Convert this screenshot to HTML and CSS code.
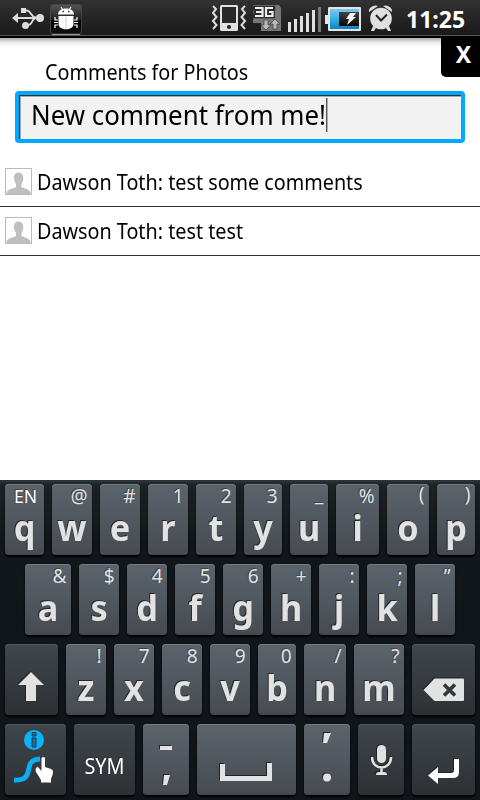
FILE: index.html
```html
<!DOCTYPE html>
<html lang="en">
<head>
<meta charset="utf-8">
<title>Comments for Photos</title>
<link rel="stylesheet" href="styles.css">
</head>
<body>
<header class="status">
  <svg class="status-icons" width="400" height="38" viewBox="0 0 400 38">
    <defs>
      <linearGradient id="bug" x2="0" y2="1"><stop offset="0" stop-color="#555"/><stop offset=".5" stop-color="#222"/><stop offset=".55" stop-color="#000"/><stop offset="1" stop-color="#111"/></linearGradient>
      <linearGradient id="cell" x2="0" y2="1"><stop offset="0" stop-color="#7cc8ec"/><stop offset=".5" stop-color="#35b0e5"/><stop offset="1" stop-color="#0785bd"/></linearGradient>
      <linearGradient id="dark" x2="0" y2="1"><stop offset="0" stop-color="#444"/><stop offset="1" stop-color="#050505"/></linearGradient>
    </defs>
    <g fill="#ddd" stroke="none">
      <path d="M12 18l6-5v10z"/><circle cx="40" cy="18" r="4"/><rect x="21" y="8" width="5" height="5"/><circle cx="25.500" cy="25.500" r="3.500"/>
      <path d="M16 18H40M24 10.500H27C31 10.500 31 17.500 36 17.500M26 25.500C34 25.500 31 18 36 18" fill="none" stroke="#ddd" stroke-width="1.800"/>
    </g>
    <rect x="50.500" y="4.500" width="31" height="29.500" rx="2" fill="url(#bug)" stroke="#444"/>
    <path d="M52 34.500H80" stroke="#999"/>
    <g fill="#fff"><path d="M58 14.500C58 6.500 74 6.500 74 14.500z"/><path d="M58.500 16H73.500V24C73.500 31 58.500 31 58.500 24z"/>
      <path d="M61 7l2 3M71 7l-2 3M58 20h-3v-3M58 22.500h-4M58 25h-3v3M74 20h3v-3M74 22.500h4M74 25h3v3" fill="none" stroke="#fff" stroke-width="1.200"/></g>
    <path d="M66 17V29" stroke="#ccc"/><path d="M62.500 11.500h1.500M68 11.500h1.500" stroke="#333" stroke-width="1.500"/>
    <path d="M213 6l3 3-3 4 3.500 4-3.500 4 3.500 4-3.500 4M245 6l-3 3 3 4-3.500 4 3.500 4-3.500 4 3.500 4" fill="none" stroke="#ddd" stroke-width="2"/>
    <rect x="220" y="5" width="18" height="26" rx="1.500" fill="#e0e0e0"/><rect x="222" y="7" width="14" height="16" fill="#292929"/><circle cx="229" cy="27" r="2" fill="#222"/>
    <path d="M253 5H279L281 8V31H261V23H253z" fill="#777"/>
    <path d="M255 8H262.500V16H255M256 12H262M273 8H266V16H272.500V12H269" fill="none" stroke="#2a2a2a" stroke-width="4.500" stroke-linecap="square"/>
    <path d="M255 8H262.500V16H255M256 12H262M273 8H266V16H272.500V12H269" fill="none" stroke="#eee" stroke-width="2.200"/>
    <path d="M264 20h4v5h3l-5 5-5-5h3zM273 29h4v-5h3l-5-5-5 5h3z" fill="#bbb" stroke="#444" stroke-width=".8"/>
    <g fill="#e0e0e0"><path d="M288 22h3v10h-3zM294 19h3v13h-3zM300 16h3v16h-3zM306 13h3v19h-3zM312 10h3v22h-3z"/><path d="M318 7h3v25h-3z" fill="#777"/></g>
    <path d="M325 15h3V8q0-1 1-1H360q1 0 1 1V30q0 1-1 1H329q-1 0-1-1V24h-3z" fill="#e5e5e5"/>
    <rect x="330" y="9" width="29" height="20" fill="url(#cell)"/><rect x="339" y="12" width="20" height="14" fill="url(#dark)"/>
    <path d="M350 13h6l-3 4h3l-9 8 2-6h-3z" fill="#f4f4f4"/>
    <g fill="#e0e0e0"><path d="M369 12c-1-4 5-8 9-6zM392 12c1-4-5-8-9-6z"/><circle cx="381" cy="18.500" r="10.800"/><path d="M373 26l-2 5h3l2-3zM389 26l2 5h-3l-2-3z"/></g>
    <path d="M376 15l5 5.500 6-6" fill="none" stroke="#222" stroke-width="2"/>
  </svg>
  <span class="clock">11:25</span>
</header>
<main class="page">
  <button class="close"><span>X</span></button>
  <h1 class="title"><span class="narrow">Comments for Photos</span></h1>
  <div class="field"><span class="value">New comment from me!</span></div>
  <ul class="comments">
    <li><svg class="avatar" width="27" height="27"><rect x=".5" y=".5" width="26" height="26" fill="#fff" stroke="#bbb"/><path d="M1.500 26v-2c2-3 8-4 9.500-5v-3c-3-4-3-11.500 2.500-11.500S19.500 12 16.500 16v3c2 1 7 2 9 5v2z" fill="#bfbfbf"/></svg><span class="narrow">Dawson Toth: test some comments</span></li>
    <li><svg class="avatar" width="27" height="27"><rect x=".5" y=".5" width="26" height="26" fill="#fff" stroke="#bbb"/><path d="M1.500 26v-2c2-3 8-4 9.500-5v-3c-3-4-3-11.500 2.500-11.500S19.500 12 16.500 16v3c2 1 7 2 9 5v2z" fill="#bfbfbf"/></svg><span class="narrow">Dawson Toth: test test</span></li>
  </ul>
</main>
<section class="keyboard">
  <div class="row row1">
    <div class="key"><i class="lang">EN</i><b>q</b></div><div class="key"><i>@</i><b>w</b></div><div class="key"><i>#</i><b>e</b></div><div class="key"><i>1</i><b>r</b></div><div class="key"><i>2</i><b>t</b></div><div class="key"><i>3</i><b>y</b></div><div class="key"><i class="raised">_</i><b>u</b></div><div class="key"><i>%</i><b>i</b></div><div class="key"><i class="raised">(</i><b>o</b></div><div class="key"><i class="raised">)</i><b>p</b></div>
  </div>
  <div class="row row2">
    <div class="key"><i>&amp;</i><b>a</b></div><div class="key"><i>$</i><b>s</b></div><div class="key"><i>4</i><b>d</b></div><div class="key"><i>5</i><b>f</b></div><div class="key"><i>6</i><b>g</b></div><div class="key"><i>+</i><b>h</b></div><div class="key"><i>:</i><b>j</b></div><div class="key"><i>;</i><b>k</b></div><div class="key"><i>”</i><b>l</b></div>
  </div>
  <div class="row row3">
    <div class="key dark"><svg width="53" height="71"><path class="ink" d="M26 28l13 13h-8v16H21V41h-8z"/></svg></div>
    <div class="key"><i>!</i><b>z</b></div><div class="key"><i>7</i><b>x</b></div><div class="key"><i>8</i><b>c</b></div><div class="key"><i>9</i><b>v</b></div><div class="key"><i>0</i><b>b</b></div><div class="key"><i>/</i><b>n</b></div><div class="key"><i>?</i><b>m</b></div>
    <div class="key dark"><svg width="63" height="71"><path class="ink" d="M11.500 46l11-11.500H51q1 0 1 1V56q0 1-1 1H22.500z"/><path d="M32 40.500l11 11M43 40.500l-11 11" stroke="#33383c" stroke-width="3.600"/></svg></div>
  </div>
  <div class="row row4">
    <div class="key dark"><svg class="flat" width="61" height="71"><circle cx="29" cy="16" r="10" fill="#09b4f8"/><path d="M27 8.500h4v3.500h-4zM27 14h4v9h-4z" fill="#1a6f98" stroke="#23384a"/><path d="M9 56C33 57 15 36 35 35" fill="none" stroke="#0aaef5" stroke-width="4.800"/><path class="white" d="M36.500 34q2-2 3.500 0V43l6 2q2 .5 2 3c0 4-2 5-2 8v2.500H36V56l-5-8c-1-3 0-5 2-5l3.500 4z"/></svg></div>
    <div class="key dark"><span class="sym">SYM</span></div>
    <div class="key"><svg width="46" height="71"><path class="ink" d="M17 22h12v4H17zM21 51h6l-3 10h-4z"/></svg></div>
    <div class="key"><svg width="99" height="71"><path class="ink" d="M23 40h5v12h42V39h5v18H23z"/></svg></div>
    <div class="key"><svg width="46" height="71"><path class="ink" d="M20 9h7l-4 10h-4z"/><circle class="ink" cx="23" cy="53.500" r="4"/></svg></div>
    <div class="key dark"><svg width="46" height="71"><rect class="ink" x="19" y="21" width="9" height="18" rx="4.500"/><path d="M14 33c0 14 19 14 19 0M23.500 43v5" fill="none" stroke="#e2e2e2" stroke-width="2.500"/><path class="ink" d="M18 51q0-3 3-3h5q3 0 3 3z"/></svg></div>
    <div class="key dark"><svg width="63" height="71"><path class="white" d="M16 51.500l10-8.500v6h13q3 0 3-3V35h5v13q0 6-6 6H26v6z"/></svg></div>
  </div>
</section>
</body>
</html>
```

FILE: styles.css
```css
* { box-sizing: border-box; }
body { margin: 0; width: 480px; height: 800px; overflow: hidden; display: flex; flex-direction: column; background: #fff; color: #000; font-family: "Noto Sans", "Open Sans", sans-serif; }
.status { height: 38px; flex: none; display: flex; background: linear-gradient(#323232, #191919 35px, #555 35px, #555 36px, #000 36px); }
.status-icons { flex: none; }
.clock { margin-left: 6px; color: #fff; font-weight: 700; font-size: 23px; line-height: 38px; white-space: nowrap; }
.page { position: relative; height: 442px; flex: none; background: linear-gradient(#aaa, #e8e8e8 4px, #fff 9px); }
.close { position: absolute; top: 0; right: 0; width: 39px; height: 39px; padding: 0 0 7px 6px; border: 0; border-radius: 0 0 0 5px; background: #000; color: #fff; font: 700 23px/32px "Noto Sans", sans-serif; }
.title { margin: 0; padding: 19px 0 0 45px; font-size: 21px; font-weight: 400; line-height: 30px; }
.narrow { display: inline-block; transform: scaleX(.941); transform-origin: left; white-space: nowrap; }
.field { margin: 4px 15px 0; height: 52px; border: 4px solid #00a8ff; border-radius: 4px; background: #f2f2f2; box-shadow: inset 1px 1px #333, inset 2px 2px #aaa; padding: 3px 0 0 12px; font-size: 28px; }
.value { display: block; width: max-content; height: 34px; line-height: 33px; border-right: 1.100px solid #000; transform: scaleX(.923); transform-origin: left; white-space: nowrap; }
.comments { list-style: none; margin: 15px 0 0; padding: 0; }
.comments li { height: 49px; display: flex; align-items: center; gap: 5px; padding-left: 5px; border-bottom: 1px solid #333; font-size: 21px; line-height: 30px; }
.avatar { margin-bottom: 2px; }
.keyboard { height: 320px; flex: none; background: linear-gradient(#30363a, #1d2226 5px, #11161b 60px, #10151a); padding: 4px 5px 5px; display: flex; flex-direction: column; gap: 9px; }
.row { display: grid; gap: 8px; height: 71px; }
.row1 { grid-template-columns: 39px 40px 40px 40px 40px 38px 38px 43px 42px 38px; }
.row2 { grid-template-columns: 46px repeat(8, 40px); padding-left: 20px; }
.row3 { grid-template-columns: 53px repeat(4, 40px) 38px 42px 50px 63px; }
.row4 { grid-template-columns: 61px 61px 46px 99px 46px 46px 63px; }
.key { display: flex; flex-direction: column; height: 71px; border-radius: 4px; background: linear-gradient(#5b646c, #474b51); box-shadow: inset 0 1px #747c83, inset 0 -1px #3f4348, 0 2px 2px #000; color: #e2e2e2; text-shadow: -1px -1px #25292d; }
.key.dark { background: linear-gradient(#41464d, #2d3134); box-shadow: inset 0 1px #555b61, 0 2px 2px #000; }
.key i { font-style: normal; font-size: 19px; line-height: 24px; height: 24px; text-align: right; padding-right: 4.500px; text-shadow: -1px -1px #3b4248; }
.key i.raised { line-height: 21px; }
.key i.lang { font-size: 17.500px; color: #fff; text-align: center; padding: 0 0 0 2px; }
.key b { font-size: 36px; line-height: 40px; text-align: center; transform: scaleX(.95); }
.key svg { display: block; filter: drop-shadow(-1px -1px 0 #202428); }
.key svg.flat { filter: none; }
.ink { fill: #e2e2e2; }
.white { fill: #fff; }
.sym { color: #fff; font-size: 22px; line-height: 83px; text-align: center; transform: scaleX(.9); }
```
